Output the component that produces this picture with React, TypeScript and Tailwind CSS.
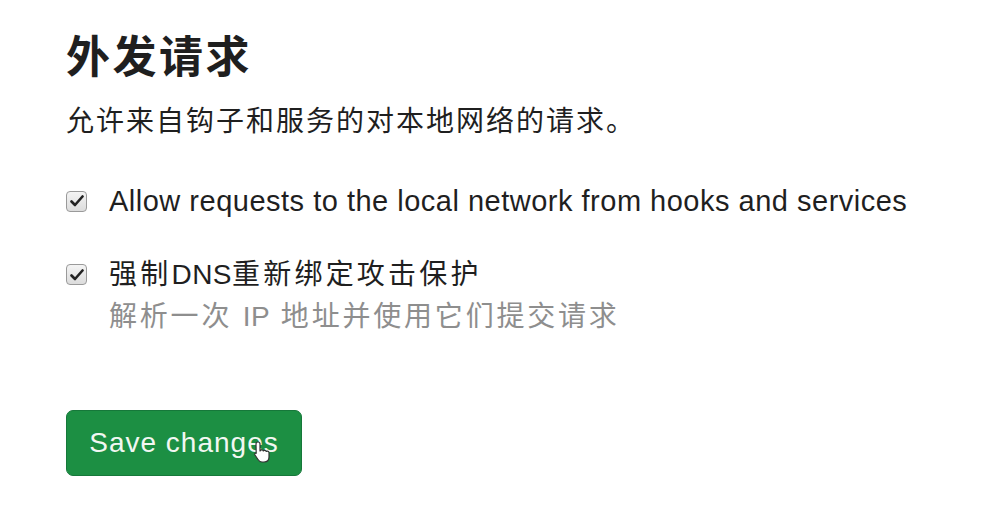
import React from 'react';

const font = { fontFamily: '"Liberation Sans", "Noto Sans CJK SC", sans-serif' };

const Check: React.FC = () => (
  <span className="flex h-[21px] w-[21px] shrink-0 items-center justify-center rounded-[4px] border border-[#9a9a9a] bg-gradient-to-b from-[#f4f4f4] to-[#dcdcdc]">
    <svg width="14" height="12" viewBox="0 0 14 12">
      <path d="M1.5 6.5 L5 10 L12.5 1.5" fill="none" stroke="#222" strokeWidth="2.6" strokeLinecap="round" strokeLinejoin="round" />
    </svg>
  </span>
);

export default function App() {
  return (
    <div className="min-h-[515px] w-[986px] bg-white pl-[66px] pt-[30px] text-[#1f1f1f]" style={font}>
      <h1 className="text-[44px] font-bold leading-[56px] tracking-[2.5px]">外发请求</h1>
      <p className="mt-[18px] text-[28px] leading-[36px] tracking-[2px]">允许来自钩子和服务的对本地网络的请求。</p>

      <div className="mt-[44px] flex flex-col gap-[42px]">
        <label className="flex items-center gap-[22px]">
          <Check />
          <span className="text-[29px] leading-[34px] tracking-[0.5px]">Allow requests to the local network from hooks and services</span>
        </label>

        <div className="flex items-start gap-[22px]">
          <div className="pt-[4px]">
            <Check />
          </div>
          <div className="flex flex-col">
            <span className="text-[28px] leading-[30px] tracking-[3.2px]">
              强制<span className="tracking-[0.5px]">DNS</span>重新绑定攻击保护
            </span>
            <span className="mt-[12px] text-[28px] leading-[30px] tracking-[2.8px] text-[#8e8e8e]">
              解析一次 <span className="tracking-[0.5px]">IP</span> 地址并使用它们提交请求
            </span>
          </div>
        </div>
      </div>

      <div className="relative mt-[78px] inline-block">
        <button className="flex h-[66px] w-[236px] items-center justify-center rounded-[7px] border border-[#16783a] bg-[#1c8f43] text-[28px] tracking-[1px] text-[#f2f7f2]">
          Save changes
        </button>
        <svg className="absolute left-[186px] top-[30px]" width="22" height="24" viewBox="0 0 22 24">
          <path d="M6 2 C7.5 2 8 3 8 4 L8 11 L9 10 C10 9.5 11 10 11.3 11 L12 10.5 C13 10 14 10.6 14.2 11.5 L15 11.2 C16 11 17 11.6 17 12.8 L17 17 C17 20 15 22 12 22 L10 22 C8 22 7 21 6 19.5 L3 15 C2.4 14 3 13 4 13.2 L4.2 13.3 L4 4 C4 3 4.5 2 6 2 Z" fill="#fff" stroke="#333" strokeWidth="1.2" strokeLinejoin="round" />
        </svg>
      </div>
    </div>
  );
}
